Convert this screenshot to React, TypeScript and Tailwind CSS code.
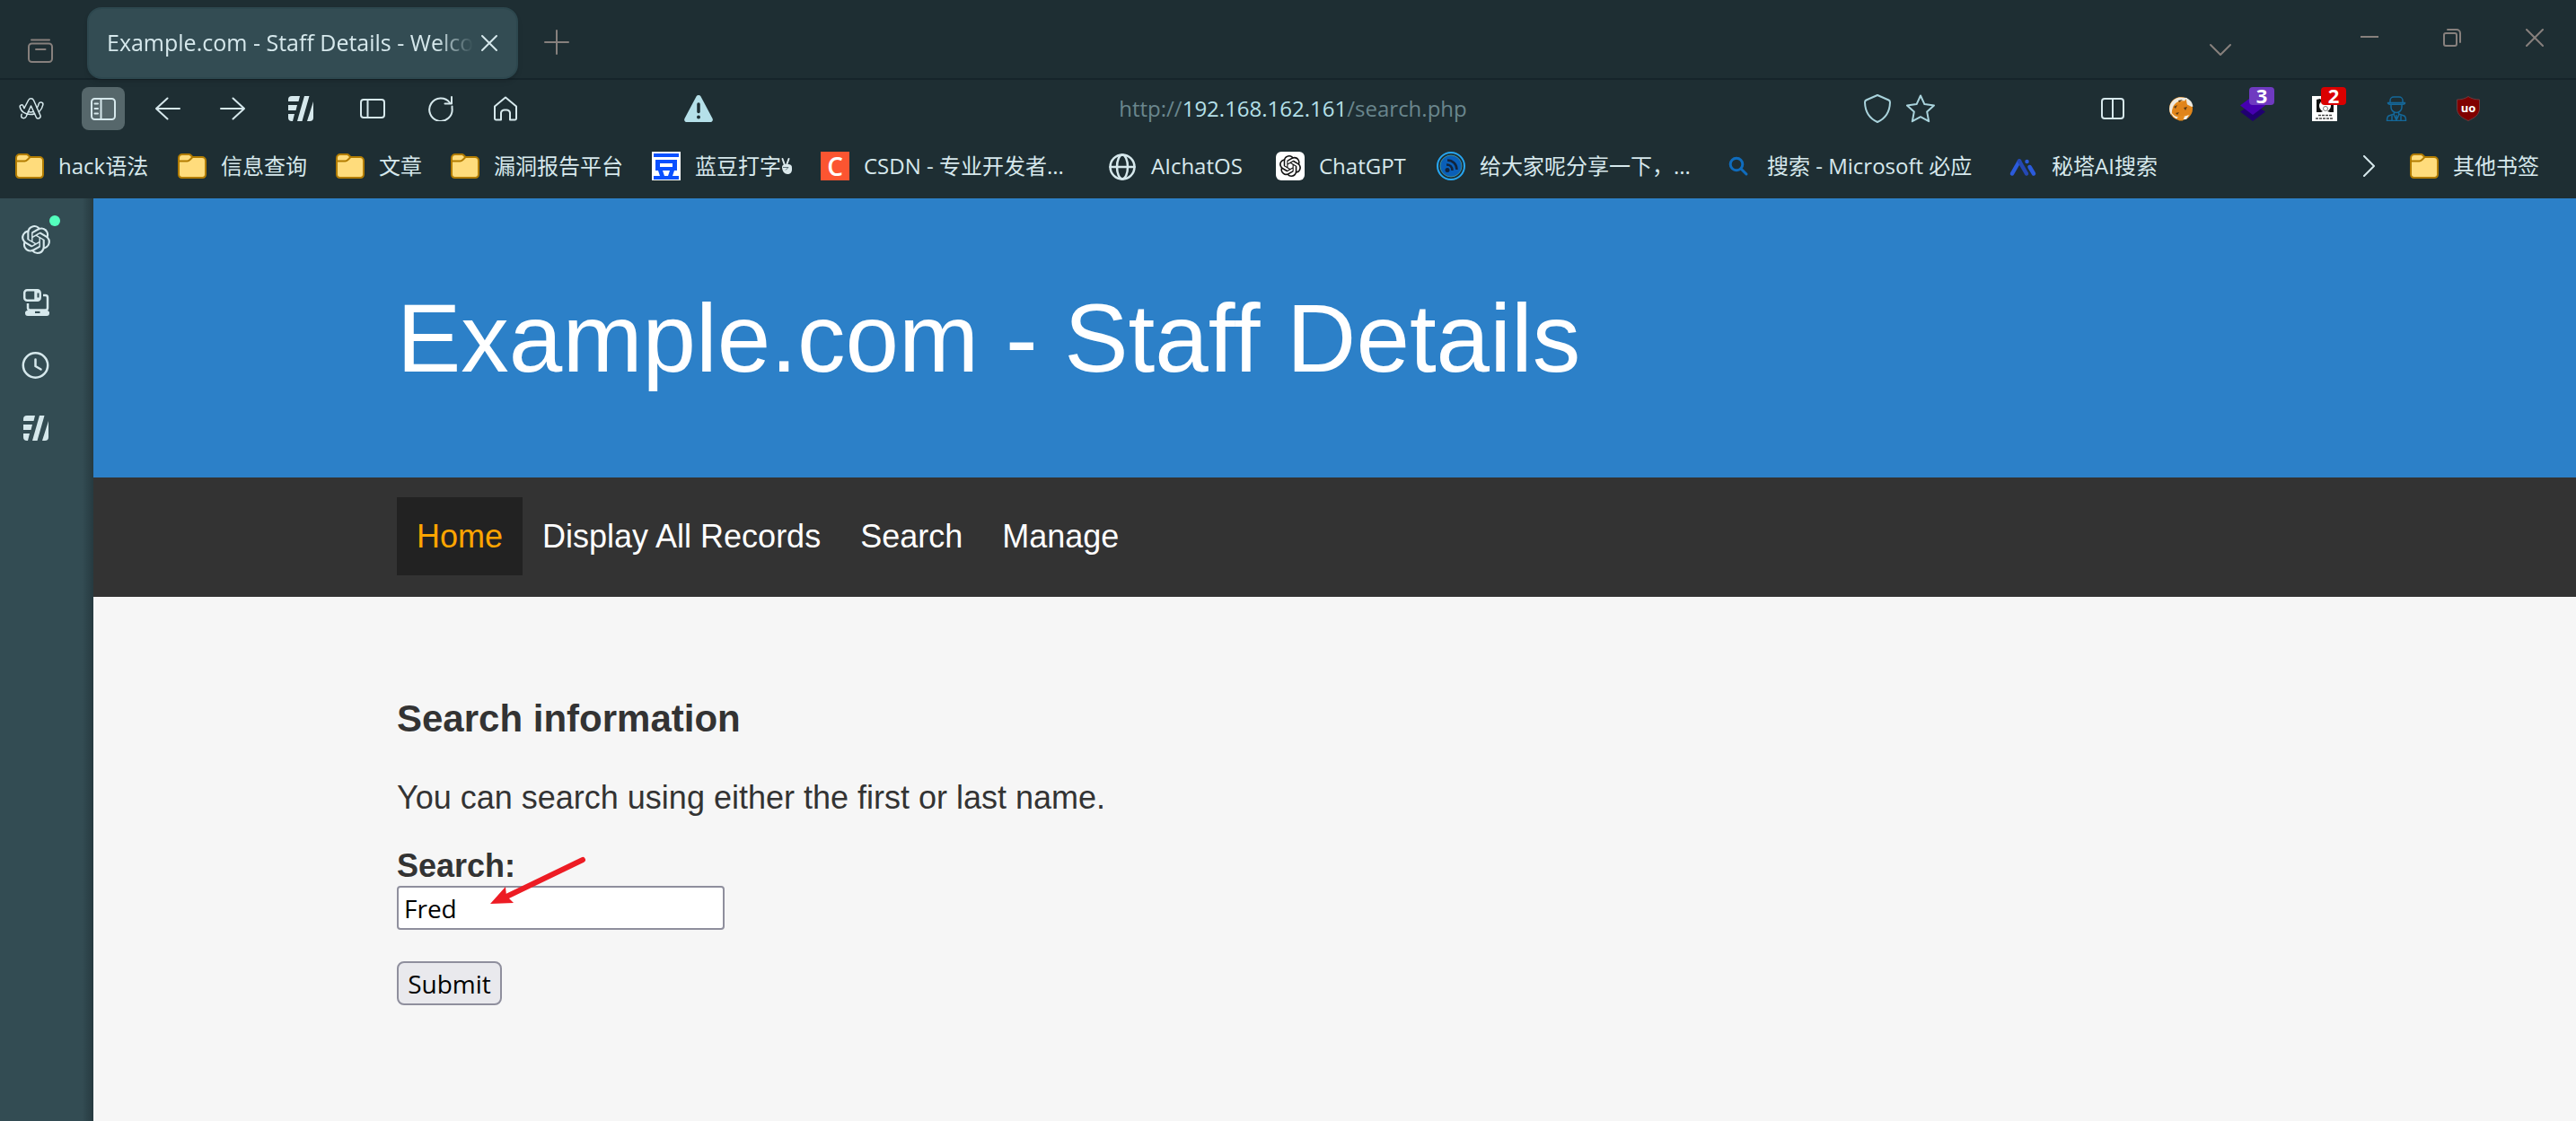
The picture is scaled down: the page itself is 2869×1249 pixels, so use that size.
import React from "react";
import { SiOpenai } from "react-icons/si";

const chromeFont =
  "font-['Open_Sans','Noto_Sans_CJK_SC',sans-serif]";

type SvgProps = { className?: string };

function Line({
  className,
  viewBox,
  w = 2,
  children,
}: {
  className: string;
  viewBox: string;
  w?: number;
  children: React.ReactNode;
}) {
  return (
    <svg
      className={className}
      viewBox={viewBox}
      fill="none"
      stroke="currentColor"
      strokeWidth={w}
      strokeLinecap="round"
      strokeLinejoin="round"
      aria-hidden="true"
    >
      {children}
    </svg>
  );
}

function ArchiveIcon() {
  return (
    <Line className="h-7 w-7" viewBox="0 0 28 28">
      <path d="M4 1.5h20" />
      <rect x="1" y="5.5" width="26" height="20.5" rx="3.5" />
      <path d="M9 12h10.5" />
    </Line>
  );
}

function ArcIcon() {
  return (
    <Line className="h-7 w-7" viewBox="0 0 28 28" w={1.5}>
      <path d="M10.500 17.500l-2.300 5.300c-1.300 2.800-6 2.300-5.500-1 .1-.6.300-1 .5-1.500" />
      <path d="M6 13.500L10.700 4.500c1.300-2.300 4.600-2.300 5.800.2l7.500 17c.9 2.700-3.200 4.600-4.600 2.100L13.500 11l-3 6.500" />
      <path d="M6 13.500c-.5-.8-.8-1.500-1-2.300-.8-2.200-4.200-1.500-3.800.9C2.200 17.500 7.500 20.700 13.300 20.600c1.500 0 3-.3 4.300-.8" />
      <path d="M10.500 17.500c1.700.5 3.800.500 5.500 0M20.300 13c.8-1.300 1.500-2.800 1.900-4.400.8-2.600 5-2 4.700 1-.7 3.300-2.300 6.100-4.500 8.200" />
    </Line>
  );
}

function SideTabsIcon() {
  return (
    <Line className="h-7 w-7" viewBox="0 0 28 28">
      <rect x="1" y="3" width="26" height="23" rx="3.500" />
      <path d="M11.500 3v23M4.500 8.500h3.500M4.500 14h3.500M4.500 19.500h3.500" />
    </Line>
  );
}

function BackIcon() {
  return (
    <Line className="h-7 w-7" viewBox="0 0 28 28">
      <path d="M27 14H1M13.500 2.500L1 14l12.500 11.500" />
    </Line>
  );
}

function ForwardIcon() {
  return (
    <Line className="h-7 w-7" viewBox="0 0 28 28">
      <path d="M1 14h26M14.500 2.500L27 14 14.500 25.500" />
    </Line>
  );
}

function StripesIcon() {
  return (
    <svg className="h-7 w-7" viewBox="0 0 28 28" fill="currentColor" aria-hidden="true">
      <path d="M4 0h9l-1.500 6H0V4a4 4 0 0 1 4-4z" />
      <path d="M0 10h10l-1.500 6H0z" />
      <path d="M0 20h7l-2 8H4a4 4 0 0 1-4-4z" />
      <path d="M18 0h5.500L15.500 28h-5.500z" />
      <path d="M28 6v18a4 4 0 0 1-4 4h-3z" />
    </svg>
  );
}

function PanelIcon() {
  return (
    <Line className="h-7 w-7" viewBox="0 0 28 28">
      <rect x="1" y="4" width="26" height="20" rx="3" />
      <path d="M8.500 4v20" />
    </Line>
  );
}

function ReloadIcon() {
  return (
    <Line className="h-7 w-7" viewBox="0 0 28 28">
      <path d="M26.500 11.500V13.500A12.700 12.700 0 1 1 24 7.500" />
      <path d="M26 1v7.500h-7.500" />
    </Line>
  );
}

function HomeIcon() {
  return (
    <Line className="h-7 w-7" viewBox="0 0 28 28">
      <path d="M2 11.500L14 1.500l12 10V25a1.500 1.500 0 0 1-1.500 1.500h-5.500v-8a4 4 0 0 0-4-3h-2a4 4 0 0 0-4 3v8H3.500A1.500 1.500 0 0 1 2 25z" />
    </Line>
  );
}

function WarningIcon() {
  return (
    <svg className="h-8 w-8" viewBox="0 0 32 32" aria-hidden="true">
      <path d="M13.500 2.500a2.900 2.900 0 0 1 5 0l13 24.500c1 2-.3 4-2.500 4H3c-2.200 0-3.500-2-2.500-4z" fill="#b5e0e9" />
      <path d="M16 11v8.500" stroke="#1e2e33" strokeWidth="3.500" strokeLinecap="round" />
      <circle cx="16" cy="25.500" r="2" fill="#1e2e33" />
    </svg>
  );
}

function ShieldIcon() {
  return (
    <Line className="h-8 w-8" viewBox="0 0 32 32">
      <path d="M16 1l12.500 5.500c1 .5 1.500 1.300 1.500 2.500-.3 10-5 18-14 22C7 27 2.300 19 2 9c0-1.200.5-2 1.500-2.500z" />
    </Line>
  );
}

function StarIcon() {
  return (
    <Line className="h-8 w-8" viewBox="0 0 32 32">
      <path d="M16 1.500l4.400 9.600 10.600 1.300-7.800 7.200 2 10.600L16 25.200l-9.200 5 2-10.600L1 12.400l10.600-1.300z" />
    </Line>
  );
}

function SplitIcon() {
  return (
    <Line className="h-7 w-7" viewBox="0 0 28 28">
      <rect x="2" y="3" width="24" height="22" rx="3" />
      <path d="M14 3v22" />
    </Line>
  );
}

function FoxIcon() {
  return (
    <svg className="h-7 w-7" viewBox="0 0 28 28" aria-hidden="true">
      <circle cx="14" cy="14" r="13" fill="#e58a1c" />
      <path d="M3 21A13 13 0 0 1 12 1.500l9 .5-3 3.500C11 4.500 5 9 4.500 15z" fill="#eeeae0" />
      <path d="M2.500 17c3 5 7 7 11.500 7l9-3-3 5h-9c-4-1-8-5-8.500-9z" fill="#f4f1ea" />
      <path d="M20 2v7l6 3 1.500-.5A13 13 0 0 0 20 2z" fill="#eeeae0" />
      <path d="M8 10l7-2 5-3 1 5 5 4-1 6-6 1-6 2-6-3-3-4z" fill="#e0841a" />
      <path d="M6 12l4-2-2 4zM17 13l4-1-2 4zM8 19l4-1-2 3zM11 5l5-1-4 3z" fill="#5a3a14" />
      <path d="M9 25l4-3 5 1-2 4.500h-4z" fill="#e58a1c" />
    </svg>
  );
}

function LayersIcon() {
  return (
    <svg className="h-7 w-7" viewBox="0 0 28 28" aria-hidden="true">
      <path d="M14 8l14 9.500L14 28 0 17.500z" fill="#200070" />
      <path d="M14 0l14 10.500L14 21 0 10.500z" fill="#4600b0" />
    </svg>
  );
}

function PortraitIcon() {
  return (
    <svg className="h-7 w-7" viewBox="0 0 28 28" aria-hidden="true">
      <path d="M0 0h28v28H0z" fill="#fff" />
      <path d="M5 18V4l4-1 3 3h12v12h-4l-6-2-4 2z" fill="#111" />
      <circle cx="14.500" cy="11" r="6.500" fill="#fff" />
      <circle cx="15" cy="14" r="2.500" fill="none" stroke="#777" />
      <path d="M7 21.500h15M4 25h20" stroke="#444" strokeWidth="1.500" strokeDasharray="3 1" />
    </svg>
  );
}

function AgentIcon() {
  return (
    <Line className="h-7 w-7 text-[#14689a]" viewBox="0 0 28 28" w={1.500}>
      <path d="M7 7.500V5a4 4 0 0 1 4-4h6a4 4 0 0 1 4 4v2.500" />
      <path d="M4.500 7.500h19c0 1-1 1.700-2.500 1.700H7c-1.500 0-2.500-.7-2.500-1.700z" />
      <path d="M8 9.500v3c0 3 2.500 6 6 6s6-3 6-6v-3" />
      <path d="M11.500 18v2L5.500 22c-1.500.8-2 2.500-2 5.500h21c0-3-.5-4.700-2-5.500l-6-2v-2" />
      <path d="M11 20.500l3 6.500 3-6.500M14 21.500v4M9 22v5M19 22v5" />
    </Line>
  );
}

function UblockIcon() {
  return (
    <svg className="h-7 w-7" viewBox="0 0 28 28" aria-hidden="true">
      <path d="M14 .5C10.500 3 6 4 1.500 4v10c0 7 6 10.500 12.500 13.500 6.500-3 12.500-6.500 12.500-13.500V4C22 4 17.500 3 14 .5z" fill="#800000" stroke="#6b3b3f" />
      <text x="14" y="17.500" textAnchor="middle" fontSize="13" fontWeight="700" fill="#fff" fontFamily="Open Sans, sans-serif">
        uo
      </text>
    </svg>
  );
}

function FolderIcon() {
  return (
    <svg className="h-8 w-8" viewBox="0 0 32 32" aria-hidden="true">
      <path
        d="M5 3h7.500c1 0 1.500.5 2.200 1.200L16.500 6H27a4 4 0 0 1 4 4v15.500A3.500 3.500 0 0 1 27.500 29h-23A3.500 3.500 0 0 1 1 25.500V7a4 4 0 0 1 4-4z"
        fill="#ffdc7c"
        stroke="#b27c00"
        strokeWidth="2"
      />
      <path d="M1 10.500h9.500c1.300 0 2-.5 3-1.500L16.500 6" fill="none" stroke="#b27c00" strokeWidth="2" />
    </svg>
  );
}

function BeanIcon() {
  return (
    <svg className="h-8 w-8" viewBox="0 0 32 32" aria-hidden="true">
      <path d="M0 0h32v32H0z" fill="#fff" />
      <g fill="#0a50ff">
        <path d="M2 2h28v4H2zM2 27h28v4H2z" />
        <path fillRule="evenodd" d="M4 9h24v12H4zM9 13v4h14v-4z" />
        <path d="M7 21h5l2 6H9zM20 21h5l-2 6h-5z" />
      </g>
    </svg>
  );
}

function CsdnIcon() {
  return (
    <span className="grid h-8 w-8 place-items-center bg-[#fc5531] text-[28px] leading-8 font-semibold text-white">
      C
    </span>
  );
}

function GlobeIcon() {
  return (
    <Line className="h-8 w-8" viewBox="0 0 32 32" w={2.500}>
      <circle cx="16" cy="17" r="13.500" />
      <ellipse cx="16" cy="17" rx="6" ry="13.500" />
      <path d="M2.500 17h27" />
    </Line>
  );
}

function ChatIcon() {
  return (
    <span className="grid h-8 w-8 place-items-center rounded-md bg-white text-[#111]">
      <SiOpenai className="h-6 w-6" />
    </span>
  );
}

function FeedIcon() {
  return (
    <svg className="h-8 w-8" viewBox="0 0 32 32" aria-hidden="true">
      <circle cx="16" cy="16" r="15" fill="none" stroke="#27a7f2" strokeWidth="2" />
      <circle cx="16" cy="16" r="12" fill="#0a5fb8" stroke="#3a8f9f" strokeWidth="1" />
      <circle cx="12" cy="20.500" r="2.500" fill="#12243c" />
      <path d="M11 14.500c4 0 6.500 2.500 6.500 6.500M12 9.500c6 0 10.500 4.500 10.500 10.500" fill="none" stroke="#12243c" strokeWidth="2.500" />
    </svg>
  );
}

function FindIcon() {
  return (
    <Line className="h-8 w-8 text-[#0f6cbd]" viewBox="0 0 32 32" w={3}>
      <circle cx="14" cy="14" r="6.800" />
      <path d="M19 19l6 6" />
    </Line>
  );
}

function MetasoIcon() {
  return (
    <svg className="h-8 w-8" viewBox="0 0 32 32" fill="none" strokeLinecap="round" strokeWidth="4.500" aria-hidden="true">
      <path d="M4 24.500L12 10.500" stroke="#2b5bdc" />
      <path d="M12 10.500l8 14" stroke="#2548b4" />
      <path d="M23.500 17l4.500 7.500" stroke="#2b5bdc" />
      <path d="M20.500 11v0" stroke="#2b5bdc" />
    </svg>
  );
}

function DevicesIcon() {
  return (
    <svg className="h-8 w-8" viewBox="0 0 32 32" aria-hidden="true">
      <g fill="none" stroke="currentColor" strokeWidth="2.500">
        <rect x="3.200" y="2.200" width="17.500" height="11.500" rx="3" />
        <path d="M15.500 2v12" />
        <path d="M7 17v5a2.500 2.500 0 0 0 2.500 2.500h17a2.500 2.500 0 0 0 2.500-2.500V10.500A2.500 2.500 0 0 0 26.500 8H24" />
      </g>
      <path d="M16 3h4v10h-4z" fill="currentColor" />
      <path d="M17.500 5.500h2v5h-2z" fill="#334c53" />
      <path fillRule="evenodd" d="M6.500 25h22a2.500 2.500 0 0 1 2.500 3 3 3 0 0 1-3 3H7a3 3 0 0 1-3-3 2.500 2.500 0 0 1 2.500-3zM15 25.500v2.500h5.500v-2.500z" fill="currentColor" />
    </svg>
  );
}

function ClockIcon() {
  return (
    <Line className="h-8 w-8" viewBox="0 0 32 32" w={2.500}>
      <circle cx="15.500" cy="16" r="13.700" />
      <path d="M15.500 9.500V17l6 3.500" />
    </Line>
  );
}

const bookmarks: { label: React.ReactNode; icon: React.ReactNode; width: string }[] = [
  { label: "hack语法", icon: <FolderIcon />, width: "w-[101px]" },
  { label: "信息查询", icon: <FolderIcon />, width: "w-24" },
  { label: "文章", icon: <FolderIcon />, width: "w-12" },
  { label: "漏洞报告平台", icon: <FolderIcon />, width: "w-36" },
  {
    label: (
      <span className="flex items-center">
        蓝豆打字
        <svg className="h-6 w-3" viewBox="0 0 12 24" aria-hidden="true">
          <path d="M4 11L1.500 4M6 11l2.500-7" stroke="#dbe9ec" strokeWidth="2" strokeLinecap="round" />
          <path d="M1 13c0-2 2-3 4-3h3c2.500 0 4 1.500 4 3.500V16c0 3-2 5-5 5s-6-3-6-8z" fill="#dbe9ec" />
          <path d="M2 13.500h6M5 16.500l3-3" stroke="#5b7177" />
        </svg>
      </span>
    ),
    icon: <BeanIcon />,
    width: "w-27",
  },
  { label: "CSDN - 专业开发者...", icon: <CsdnIcon />, width: "w-60" },
  { label: "AIchatOS", icon: <GlobeIcon />, width: "w-[107px]" },
  { label: "ChatGPT", icon: <ChatIcon />, width: "w-[99px]" },
  { label: "给大家呢分享一下，...", icon: <FeedIcon />, width: "w-60" },
  { label: "搜索 - Microsoft 必应", icon: <FindIcon />, width: "w-[237px]" },
  { label: "秘塔AI搜索", icon: <MetasoIcon />, width: "w-30" },
];

function ToolButton({
  label,
  className = "",
  children,
}: {
  label: string;
  className?: string;
  children: React.ReactNode;
}) {
  return (
    <button
      type="button"
      aria-label={label}
      className={`relative grid h-12 w-12 shrink-0 place-items-center rounded-lg ${className}`}
    >
      {children}
    </button>
  );
}

function TabBar() {
  return (
    <div className="flex h-[89px] items-start border-b-2 border-[#16242a] text-[#87807d]">
      <button type="button" aria-label="Tab history" className="mt-[43px] ml-[31px] h-7 w-7">
        <ArchiveIcon />
      </button>
      <div className="mt-2 ml-[38px] flex h-20 w-[480px] items-center rounded-[16px] border-2 border-[#2d474e] bg-[#334c53] pl-5 text-[#d6e8ec] shadow-md">
        <span className="w-[408px] overflow-hidden text-[25px] whitespace-nowrap [mask-image:linear-gradient(to_right,black_90%,transparent)]">
          Example.com - Staff Details - Welcome
        </span>
        <button type="button" aria-label="Close tab" className="ml-2 h-5 w-5">
          <Line className="h-5 w-5" viewBox="0 0 20 20">
            <path d="M2 2l16 16M18 2L2 18" />
          </Line>
        </button>
      </div>
      <button type="button" aria-label="New tab" className="mt-[33px] ml-[29px] h-7 w-7">
        <Line className="h-7 w-7" viewBox="0 0 28 28">
          <path d="M14 1v26M1 14h26" />
        </Line>
      </button>
      <button type="button" aria-label="List all tabs" className="mt-[41px] ml-auto h-7 w-7">
        <Line className="h-7 w-7" viewBox="0 0 28 28">
          <path d="M3 9l11 11L25 9" />
        </Line>
      </button>
      <div className="mt-8 mr-9 ml-[142px] flex gap-[72px]">
        <button type="button" aria-label="Minimize" className="h-5 w-5">
          <Line className="h-5 w-5" viewBox="0 0 20 20">
            <path d="M0 9h20" />
          </Line>
        </button>
        <button type="button" aria-label="Restore" className="h-5 w-5">
          <Line className="h-5 w-5" viewBox="0 0 20 20">
            <rect x="1" y="5" width="14" height="14" rx="2" />
            <path d="M5 1h10a4 4 0 0 1 4 4v10" />
          </Line>
        </button>
        <button type="button" aria-label="Close" className="h-5 w-5">
          <Line className="h-5 w-5" viewBox="0 0 20 20">
            <path d="M1 1l18 18M19 1L1 19" />
          </Line>
        </button>
      </div>
    </div>
  );
}

function Badge({ className, children }: { className: string; children: React.ReactNode }) {
  return (
    <span
      className={`absolute top-0 left-5 h-5 w-7 rounded-sm text-center text-[22px] leading-[18px] font-bold text-white ${className}`}
    >
      {children}
    </span>
  );
}

function Toolbar() {
  return (
    <div className="flex h-16 items-center pr-24 pl-[11px]">
      <ToolButton label="Arc"><ArcIcon /></ToolButton>
      <ToolButton label="Toggle tab sidebar" className="ml-8 bg-[#56676b]"><SideTabsIcon /></ToolButton>
      <ToolButton label="Back" className="ml-6"><BackIcon /></ToolButton>
      <ToolButton label="Forward" className="ml-6"><ForwardIcon /></ToolButton>
      <ToolButton label="Tab styles" className="ml-7"><StripesIcon /></ToolButton>
      <ToolButton label="Sidebars" className="ml-8"><PanelIcon /></ToolButton>
      <ToolButton label="Reload" className="ml-7"><ReloadIcon /></ToolButton>
      <ToolButton label="Home" className="ml-6"><HomeIcon /></ToolButton>
      <div className="mr-[174px] ml-[138px] grid flex-1 grid-cols-[1fr_auto_1fr] items-center text-[#a9d3dc]">
        <span className="pl-[37px]"><WarningIcon /></span>
        <a href="#address" className="text-2xl text-[#6a868d]">
          http://<span className="text-[#b5e0e9]">192.168.162.161</span>/search.php
        </a>
        <span className="flex justify-end gap-4">
          <button type="button" aria-label="Tracking protection"><ShieldIcon /></button>
          <button type="button" aria-label="Bookmark this page"><StarIcon /></button>
        </span>
      </div>
      <ToolButton label="Split view"><SplitIcon /></ToolButton>
      <div className="ml-7 flex gap-8">
        <ToolButton label="Fox extension"><FoxIcon /></ToolButton>
        <ToolButton label="Layers extension">
          <LayersIcon />
          <Badge className="bg-[#6f3ac0]">3</Badge>
        </ToolButton>
        <ToolButton label="Portrait extension">
          <PortraitIcon />
          <Badge className="bg-[#da0000]">2</Badge>
        </ToolButton>
        <ToolButton label="Agent extension"><AgentIcon /></ToolButton>
        <ToolButton label="Blocker extension"><UblockIcon /></ToolButton>
      </div>
    </div>
  );
}

function BookmarksBar() {
  return (
    <nav aria-label="Bookmarks" className="flex h-[68px] items-center gap-8 px-[17px] pb-1 text-2xl whitespace-nowrap">
      {bookmarks.map((b, i) => (
        <a key={i} href="#bookmark" className="flex items-center gap-4">
          {b.icon}
          <span className={b.width}>{b.label}</span>
        </a>
      ))}
      <button type="button" aria-label="More bookmarks" className="ml-auto">
        <Line className="h-6 w-6" viewBox="0 0 24 24">
          <path d="M5 1l11 11L5 23" />
        </Line>
      </button>
      <a href="#other" className="mr-6 flex items-center gap-4">
        <FolderIcon />
        <span>其他书签</span>
      </a>
    </nav>
  );
}

function Sidebar() {
  return (
    <aside className="flex w-[104px] shrink-0 flex-col gap-[38px] bg-[#334c53] bg-[linear-gradient(to_right,#334c53_88%,#263a40)] pt-[30px] pl-6 text-[#d6e8ec]">
      <button type="button" aria-label="ChatGPT" className="relative h-8 w-8">
        <SiOpenai className="h-8 w-8" />
        <span className="absolute -top-[11px] left-[31px] h-3 w-3 rounded-full bg-[#54ffbd]" />
      </button>
      <button type="button" aria-label="Devices" className="h-8 w-8"><DevicesIcon /></button>
      <button type="button" aria-label="History" className="h-8 w-8"><ClockIcon /></button>
      <button type="button" aria-label="Tab styles" className="grid h-8 w-8 place-items-center"><StripesIcon /></button>
    </aside>
  );
}

function Arrow({ className }: SvgProps) {
  return (
    <svg className={className} viewBox="0 0 108 54" aria-hidden="true">
      <path d="M103 4L16 46" stroke="#ed1c24" strokeWidth="6" strokeLinecap="round" />
      <path d="M0 53L17 34l1 10 8 8z" fill="#ed1c24" />
    </svg>
  );
}

const links = ["Home", "Display All Records", "Search", "Manage"];

function Site() {
  return (
    <div className="flex flex-1 flex-col bg-[#f6f6f6] font-['Liberation_Sans',Arial,sans-serif] text-4xl text-[#333]">
      <header className="bg-[#2c80c8] px-[338px] pt-24 pb-[95px]">
        <h1 className="text-[107px] leading-[120px] whitespace-nowrap text-white">Example.com - Staff Details</h1>
      </header>
      <nav aria-label="Site" className="flex bg-[#333] px-[338px] pt-[22px] pb-6">
        {links.map((l) => (
          <a
            key={l}
            href={`#${l}`}
            className={
              l === "Home"
                ? "bg-[#222] px-[22px] text-[36px] leading-[87px] text-[#ffa500]"
                : "px-[22px] text-[36px] leading-[87px] text-white"
            }
          >
            {l}
          </a>
        ))}
      </nav>
      <main className="px-[338px] pt-28">
        <h3 className="text-[42px] leading-[48px] font-bold">Search information</h3>
        <p className="mt-10 leading-[48px]">You can search using either the first or last name.</p>
        <form className="mt-[30px]" onSubmit={(e) => e.preventDefault()}>
          <label htmlFor="search" className="block leading-[44px] font-bold">Search:</label>
          <div className="relative w-[365px]">
            <input
              id="search"
              type="text"
              defaultValue="Fred"
              className="block h-[49px] w-full rounded border-2 border-[#8f8f9d] bg-white px-1.5 font-['Open_Sans',sans-serif] text-[28px] text-black"
            />
            <Arrow className="pointer-events-none absolute -top-[33px] left-[104px] h-[54px] w-[108px]" />
          </div>
          <button
            type="submit"
            className="mt-[35px] h-[49px] w-[117px] rounded-lg border-2 border-[#8f8f9d] bg-[#e9e9ed] font-['Open_Sans',sans-serif] text-[28px] leading-[44px] text-black"
          >
            Submit
          </button>
        </form>
      </main>
    </div>
  );
}

export default function App() {
  return (
    <div className={`flex min-h-screen flex-col bg-[#1e2e33] text-[#d6e8ec] ${chromeFont}`}>
      <TabBar />
      <Toolbar />
      <BookmarksBar />
      <div className="flex flex-1">
        <Sidebar />
        <Site />
      </div>
    </div>
  );
}
